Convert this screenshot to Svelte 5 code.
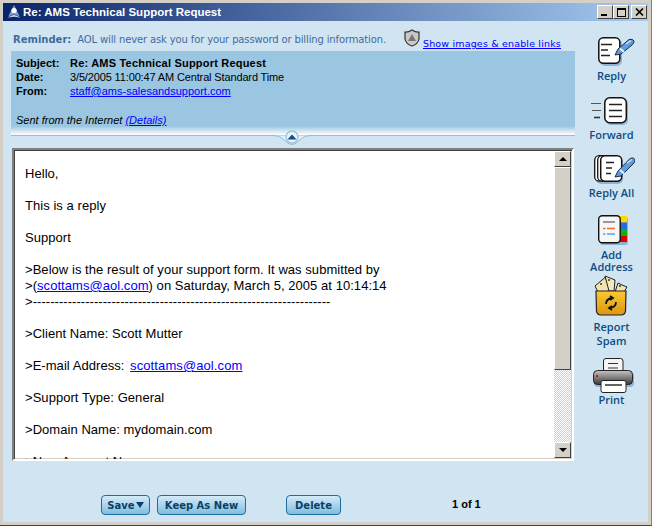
<script>
  const fields = [
    { label: 'Subject:', value: 'Re: AMS Technical Support Request', strong: true },
    { label: 'Date:', value: '3/5/2005 11:00:47 AM Central Standard Time', tight: true },
    { label: 'From:', value: 'staff@ams-salesandsupport.com', link: true }
  ];
</script>

<div class="window">
  <header class="titlebar">
    <svg class="aol" viewBox="0 0 16 16" width="16" height="16">
      <path d="M8 1 L14 13 Q8 8 2 13 Z" fill="#7f9fc8" />
      <circle cx="8" cy="6.5" r="2.6" fill="#fff" />
      <path d="M2 14 Q8 8 14 14 Q8 11.5 2 14 Z" fill="#cfe0f2" />
    </svg>
    <span class="title">Re: AMS Technical Support Request</span>
    <div class="winbtns">
      <span class="wb"><i class="min"></i></span>
      <span class="wb"><i class="max"></i></span>
      <span class="wb close">
        <svg viewBox="0 0 9 8" width="9" height="8"><path d="M1 0.5 L8 7.5 M8 0.5 L1 7.5" stroke="#000" stroke-width="1.6" /></svg>
      </span>
    </div>
  </header>

  <div class="main">
    <div class="left">
      <div class="reminder">
        <b>Reminder:</b>
        <span class="remind">AOL will never ask you for your password or billing information.</span>
        <svg class="shield" viewBox="0 0 18 18" width="18" height="18">
          <path d="M2 3 Q5 3.5 9 1 Q13 3.5 16 3 L16 10 Q15 15 9 17 Q3 15 2 10 Z" fill="#c9c9c9" stroke="#333" stroke-width="1.2" />
          <path d="M9 5 L13 12 H5 Z" fill="#777" />
        </svg>
        <a class="showlink" href="#show">Show images &amp; enable links</a>
      </div>

      <section class="details">
        {#each fields as f}
          <div class="row">
            <b class="lbl">{f.label}</b>
            {#if f.link}
              <a href="#from">{f.value}</a>
            {:else if f.strong}
              <b class="subj">{f.value}</b>
            {:else}
              <span class="date">{f.value}</span>
            {/if}
          </div>
        {/each}
        <div class="sent"><i>Sent from the Internet <a href="#details">(Details)</a></i></div>
      </section>

      <div class="divider">
        <svg class="notch" viewBox="0 0 40 17" width="40" height="17">
          <path d="M0 5.5 Q8 5.5 12 10 Q20 19 28 10 Q32 5.5 40 5.5" fill="#e4f0f8" stroke="#8fc0de" />
          <circle cx="20" cy="7" r="6" fill="#e8f2f9" stroke="#9cc4de" stroke-width="1.4" />
          <path d="M15.5 9.5 L20 4.5 L24.5 9.5 Z" fill="#0d4f8b" />
        </svg>
      </div>

      <div class="frame">
        <div class="body">
          <p>Hello,</p>
          <p>This is a reply</p>
          <p>Support</p>
          <p>&gt;Below is the result of your support form. It was submitted by<br />
            &gt;(<a href="#m">scottams@aol.com</a>) on Saturday, March 5, 2005 at 10:14:14<br />
            &gt;--------------------------------------------------------------------</p>
          <p>&gt;Client Name: Scott Mutter</p>
          <p>&gt;E-mail Address: <a class="mail" href="#m">scottams@aol.com</a></p>
          <p>&gt;Support Type: General</p>
          <p>&gt;Domain Name: mydomain.com</p>
          <p>&gt;New Account Name:</p>
        </div>
        <div class="scrollbar">
          <span class="sb"><i class="up"></i></span>
          <span class="thumb"></span>
          <span class="track"></span>
          <span class="sb"><i class="down"></i></span>
        </div>
      </div>

      <footer class="actions">
        <button class="btn save">Save<i class="caret"></i></button>
        <button class="btn keep">Keep As New</button>
        <button class="btn del">Delete</button>
        <span class="count">1 of 1</span>
      </footer>
    </div>

    <nav class="side">
      <!-- icon viewBoxes use page pixels, so they line up with the reference -->
      <div class="tool reply">
        <svg viewBox="588 36 47 30" width="47" height="30">
          <rect x="600" y="39" width="22" height="27" rx="5" fill="#8fb4d2" />
          <rect x="598.8" y="37.8" width="21" height="25.5" rx="4.5" fill="#fff" stroke="#111" stroke-width="1.5" />
          <path d="M601 44.5 H612 M601 50 H608 M601 55.5 H610" stroke="#222" stroke-width="1.5" />
          <path d="M615 55 L618 49 L629 39.5 Q633 38.5 634 41 Q634 43.5 632 45 L621 54 Z" fill="#5e9be0" stroke="#1a2c44" stroke-width="1" />
          <path d="M620 48.5 L624 52" stroke="#e8f2fb" stroke-width="2" />
          <path d="M626 44 L631 40.5" stroke="#cfe3f8" stroke-width="1.4" />
        </svg>
        <span>Reply</span>
      </div>
      <div class="tool forward">
        <svg viewBox="588 96 47 29" width="47" height="29">
          <path d="M591 103.5 H601 M592 110.5 H601" stroke="#555" stroke-width="1.2" />
          <path d="M594 117.5 H600" stroke="#333" stroke-width="1.6" />
          <rect x="606" y="99" width="22" height="26" rx="5" fill="#8fb4d2" />
          <rect x="604.8" y="97.8" width="21.5" height="25" rx="5" fill="#fff" stroke="#111" stroke-width="1.5" />
          <path d="M609 104.5 H622 M609 110.5 H622 M609 116.5 H622" stroke="#222" stroke-width="1.5" />
        </svg>
        <span>Forward</span>
      </div>
      <div class="tool replyall">
        <svg viewBox="588 154 47 30" width="47" height="30">
          <rect x="596" y="157" width="27" height="27" rx="5" fill="#8fb4d2" />
          <rect x="594.7" y="155.7" width="20" height="25.5" rx="4.5" fill="#fff" stroke="#111" stroke-width="1.3" />
          <rect x="597.7" y="155.7" width="20" height="25.5" rx="4.5" fill="#fff" stroke="#111" stroke-width="1.3" />
          <rect x="600.7" y="155.7" width="21" height="25.5" rx="4.5" fill="#fff" stroke="#111" stroke-width="1.5" />
          <path d="M606 162.5 H614 M606 168 H612 M606 173.5 H611" stroke="#222" stroke-width="1.5" />
          <path d="M615 177 L618 171 L630 158.5 Q634 157 635 160 Q635 162.5 633 164 L621 176 Z" fill="#5e9be0" stroke="#1a2c44" stroke-width="1" />
          <path d="M620 170 L624 173.5" stroke="#e8f2fb" stroke-width="2" />
          <path d="M627 163 L632 159.5" stroke="#cfe3f8" stroke-width="1.4" />
        </svg>
        <span>Reply All</span>
      </div>
      <div class="tool addr">
        <svg viewBox="588 215 47 30" width="47" height="30">
          <rect x="600" y="217" width="28" height="28" rx="3" fill="#8fb4d2" />
          <rect x="620" y="216" width="7" height="6.5" fill="#ffd800" />
          <rect x="620" y="222.5" width="7" height="6.5" fill="#1d6fe0" />
          <rect x="620" y="229" width="7" height="6.5" fill="#10b010" />
          <rect x="620" y="235.5" width="7" height="6.5" fill="#e00000" />
          <rect x="598.7" y="215.7" width="21.5" height="27" rx="3.5" fill="#f6f6f6" stroke="#111" stroke-width="1.4" />
          <path d="M603 222 H615" stroke="#999" stroke-width="2" />
          <path d="M603 228.5 H605.5 M607 228.5 H615" stroke="#f07030" stroke-width="1.4" />
          <path d="M603 234 H605.5 M607 234 H615" stroke="#50a8ef" stroke-width="1.4" />
        </svg>
        <span>Add<br />Address</span>
      </div>
      <div class="tool spam">
        <svg viewBox="588 275 47 41" width="47" height="41">
          <defs>
            <linearGradient id="box" x1="0" y1="0" x2="0" y2="1">
              <stop offset="0" stop-color="#f9c92e" />
              <stop offset="1" stop-color="#dd9612" />
            </linearGradient>
          </defs>
          <path d="M595 286 L605 277.5 L612 291 L598 292 Z" fill="#f4e2b0" stroke="#222" />
          <circle cx="601" cy="284" r="1" fill="#333" />
          <path d="M605 276 L615 280 L614 291 L609 291 Z" fill="#f7e8c0" stroke="#222" />
          <circle cx="609" cy="280" r="1" fill="#333" />
          <path d="M618 283 L622 285 L627 287 L624 292 L615 292 Z" fill="#f4e2b0" stroke="#222" />
          <circle cx="620" cy="286" r="1" fill="#333" />
          <path d="M596 291 H626 L625.5 311 Q625 315 621 315 H601 Q597 315 596.5 311 Z" fill="url(#box)" stroke="#222" stroke-width="1.2" />
          <path d="M606 304 Q606 299 612 298 M610 296 L613 298 L610 300 M616 302 Q616 307 610 308 M612 306 L609 308 L612 310" fill="none" stroke="#111" stroke-width="1.8" />
        </svg>
        <span>Report<br />Spam</span>
      </div>
      <div class="tool print">
        <svg viewBox="588 358 47 36" width="47" height="36">
          <defs>
            <linearGradient id="pg" x1="0" y1="0" x2="0" y2="1">
              <stop offset="0" stop-color="#c4c4c4" />
              <stop offset="1" stop-color="#3a3a3a" />
            </linearGradient>
          </defs>
          <rect x="603.5" y="358.5" width="19.5" height="15" rx="2.5" fill="#f4f4f4" stroke="#222" />
          <path d="M608 363.5 H618 M608 368 H618" stroke="#333" stroke-width="1.2" />
          <rect x="594" y="372" width="40" height="15" rx="4" fill="#8fb4d2" />
          <rect x="593.5" y="370.5" width="39" height="14" rx="4" fill="url(#pg)" stroke="#222" />
          <rect x="596" y="375" width="2" height="2" fill="#f00" />
          <rect x="601" y="380.5" width="25" height="12" rx="2" fill="#fff" stroke="#222" />
          <path d="M605 385 H622" stroke="#222" stroke-width="1.4" />
        </svg>
        <span>Print</span>
      </div>
    </nav>
  </div>
</div>

<style>
  :global(body) {
    margin: 0;
    background: #d4d0c8;
  }
  .window {
    box-sizing: border-box;
    width: 652px;
    height: 526px;
    padding: 3px;
    background: #d4d0c8;
    border-right: 1px solid #808080;
    border-bottom: 1px solid #404040;
    display: flex;
    flex-direction: column;
    font-family: "Liberation Sans", Arial, sans-serif;
    font-size: 11px;
    color: #000;
  }
  .titlebar {
    flex: none;
    height: 18px;
    background: linear-gradient(90deg, #0a246a, #a6caf0);
    display: flex;
    align-items: center;
    padding: 0 1px 0 3px;
    gap: 1px;
  }
  .aol { flex: none; }
  .title {
    color: #fff;
    font: bold 11.5px "Liberation Sans", sans-serif;
    white-space: nowrap;
  }
  .winbtns {
    margin-left: auto;
    display: flex;
    align-items: center;
  }
  .wb {
    box-sizing: border-box;
    width: 16px;
    height: 14px;
    background: #d4d0c8;
    border: 1px solid;
    border-color: #fff #404040 #404040 #fff;
    display: flex;
    align-items: center;
    justify-content: center;
  }
  .wb.close { margin-left: 2px; }
  .min {
    width: 6px;
    height: 2px;
    background: #000;
    margin-top: 6px;
    margin-right: 2px;
  }
  .max {
    box-sizing: border-box;
    width: 9px;
    height: 9px;
    border: 1px solid #000;
    border-top-width: 2px;
  }
  .main {
    flex: 1;
    min-height: 0;
    display: flex;
    background: #d0e4f2;
  }
  .left {
    width: 572px;
    flex: none;
    padding-left: 8px;
    box-sizing: border-box;
    display: flex;
    flex-direction: column;
  }
  .reminder {
    height: 30px;
    display: flex;
    color: #3f6c9d;
    box-sizing: border-box;
    padding: 12px 0 0 2px;
    font-family: "DejaVu Sans", sans-serif;
    font-size: 10px;
    line-height: 13px;
    white-space: nowrap;
  }
  .remind {
    margin-left: 6px;
    letter-spacing: -0.14px;
  }
  .shield {
    flex: none;
    margin: -4px 0 0 17px;
  }
  .showlink {
    margin: 4px 0 0 2px;
    font-family: "DejaVu Sans", sans-serif;
    font-size: 9.5px;
    letter-spacing: 0.17px;
  }
  a { color: #0000ff; text-decoration: underline; }
  .mail { margin-left: 2px; letter-spacing: 0.1px; }
  .details {
    height: 84px;
    box-sizing: border-box;
    padding: 5px 0 0 5px;
    background: linear-gradient(180deg, #9ac6e1 0, #9ac6e1 75px, #ffffff 84px);
    line-height: 14px;
  }
  .row { display: flex; }
  .lbl { width: 54px; flex: none; }
  .subj { letter-spacing: 0.2px; }
  .date { letter-spacing: -0.14px; }
  .sent { margin-top: 15px; }
  .divider {
    height: 12px;
    border-top: 1px solid #8fc0de;
    position: relative;
  }
  .notch {
    position: absolute;
    left: 261px;
    top: -6px;
  }
  .frame {
    box-sizing: border-box;
    width: 562px;
    height: 313px;
    margin-left: 1px;
    border: 2px solid;
    border-color: #808080 #fff #fff #808080;
    box-shadow: inset 1px 1px 0 #404040, inset -1px -1px 0 #d4d0c8;
    background: #fff;
    display: flex;
    padding: 1px 1px 0 1px;
  }
  .body {
    flex: 1;
    overflow: hidden;
    padding: 15px 0 0 10px;
    font-size: 13px;
    line-height: 16px;
    letter-spacing: 0.05px;
  }
  .body p { margin: 0 0 16px; }
  .scrollbar {
    width: 17px;
    flex: none;
    display: flex;
    flex-direction: column;
    margin-bottom: 1px;
  }
  .sb, .thumb {
    box-sizing: border-box;
    background: #d4d0c8;
    border: 1px solid;
    border-color: #fff #404040 #404040 #fff;
    display: flex;
    align-items: center;
    justify-content: center;
    flex: none;
  }
  .sb { height: 16px; }
  .thumb { height: 203px; }
  .track {
    flex: 1;
    background: repeating-conic-gradient(#d4d0c8 0 25%, #fff 0 50%) 0 0 / 2px 2px;
  }
  .up, .down {
    width: 0;
    height: 0;
    border-left: 4px solid transparent;
    border-right: 4px solid transparent;
  }
  .up { border-bottom: 4px solid #000; }
  .down { border-top: 4px solid #000; }
  .actions {
    flex: 1;
    display: flex;
    align-items: flex-start;
    padding: 34px 0 0 90px;
  }
  .btn {
    box-sizing: border-box;
    height: 20px;
    padding: 0;
    border: 1px solid #1f6d9c;
    border-radius: 4px;
    background: linear-gradient(180deg, #d5ebf8, #7fbde0);
    color: #0d3f66;
    font: bold 10px "DejaVu Sans", sans-serif;
    display: flex;
    align-items: center;
    justify-content: center;
  }
  .save { width: 49px; }
  .keep { width: 89px; margin-left: 7px; }
  .del { width: 55px; margin-left: 40px; }
  .caret {
    width: 0;
    height: 0;
    border-left: 4px solid transparent;
    border-right: 4px solid transparent;
    border-top: 6px solid #0d3f66;
    margin-left: 1px;
  }
  .count {
    margin-left: 111px;
    font-weight: bold;
    line-height: 18px;
  }
  .side {
    flex: 1;
    display: flex;
    flex-direction: column;
    align-items: center;
    padding: 15px 0 0 0;
  }
  .tool {
    display: flex;
    flex-direction: column;
    align-items: center;
    text-align: center;
    font: 600 11px/12px "Open Sans", sans-serif;
    color: #0f4c81;
  }
  .tool span { display: block; }
  .tool svg { display: block; }
  .tool.reply span { margin-top: 4px; }
  .tool.forward { margin-top: 14px; }
  .tool.forward span { margin-top: 4px; }
  .tool.replyall { margin-top: 13px; }
  .tool.replyall span { margin-top: 3px; }
  .tool.addr { margin-top: 16px; }
  .tool.addr span { margin-top: 4px; }
  .tool.spam { margin-top: 2px; line-height: 14px; }
  .tool.spam span { margin-top: 4px; }
  .tool.print { margin-top: 10px; }
</style>
